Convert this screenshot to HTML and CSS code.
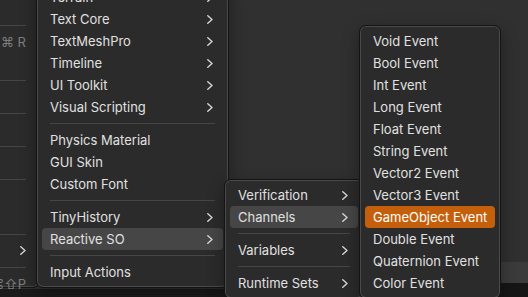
FILE: index.html
```html
<!DOCTYPE html>
<html>
<head>
<meta charset="utf-8">
<link rel="stylesheet" href="styles.css">
</head>
<body>
<div class="desk">
  <div class="bottom-strip"></div>
  <div class="right-band"></div>
  <div class="right-bottom"></div>

  <div class="bgmenu">
    <div class="brow"></div>
    <div class="bsep"><span></span></div>
    <div class="brow"><span class="short">⌘ R</span></div>
    <div class="brow"></div>
    <div class="bsep"><span></span></div>
    <div class="brow"></div>
    <div class="bsep"><span></span></div>
    <div class="brow"></div>
    <div class="bsep"><span></span></div>
    <div class="brow"></div>
    <div class="bsep"><span></span></div>
    <div class="brow"></div>
    <div class="brow"></div>
    <div class="bsep"><span></span></div>
    <div class="brow"><svg class="chev" width="6" height="9" viewBox="0 0 6 9"><polyline points="0.8,0.8 5,4.5 0.8,8.2"/></svg></div>
    <div class="bsep"><span></span></div>
    <div class="brow"><span class="short">⌘⇧P</span></div>
  </div>

  <div class="menu m1">
    <div class="item"><span>Terrain</span><svg class="chev" width="6" height="9" viewBox="0 0 6 9"><polyline points="0.8,0.8 5,4.5 0.8,8.2"/></svg></div>
    <div class="item"><span>Text Core</span><svg class="chev" width="6" height="9" viewBox="0 0 6 9"><polyline points="0.8,0.8 5,4.5 0.8,8.2"/></svg></div>
    <div class="item"><span>TextMeshPro</span><svg class="chev" width="6" height="9" viewBox="0 0 6 9"><polyline points="0.8,0.8 5,4.5 0.8,8.2"/></svg></div>
    <div class="item"><span>Timeline</span><svg class="chev" width="6" height="9" viewBox="0 0 6 9"><polyline points="0.8,0.8 5,4.5 0.8,8.2"/></svg></div>
    <div class="item"><span>UI Toolkit</span><svg class="chev" width="6" height="9" viewBox="0 0 6 9"><polyline points="0.8,0.8 5,4.5 0.8,8.2"/></svg></div>
    <div class="item"><span>Visual Scripting</span><svg class="chev" width="6" height="9" viewBox="0 0 6 9"><polyline points="0.8,0.8 5,4.5 0.8,8.2"/></svg></div>
    <div class="sep"><span></span></div>
    <div class="item"><span>Physics Material</span></div>
    <div class="item"><span>GUI Skin</span></div>
    <div class="item"><span>Custom Font</span></div>
    <div class="sep"><span></span></div>
    <div class="item"><span>TinyHistory</span><svg class="chev" width="6" height="9" viewBox="0 0 6 9"><polyline points="0.8,0.8 5,4.5 0.8,8.2"/></svg></div>
    <div class="item hl"><span>Reactive SO</span><svg class="chev" width="6" height="9" viewBox="0 0 6 9"><polyline points="0.8,0.8 5,4.5 0.8,8.2"/></svg></div>
    <div class="sep"><span></span></div>
    <div class="item"><span>Input Actions</span></div>
  </div>

  <div class="menu m2">
    <div class="item"><span>Verification</span><svg class="chev" width="6" height="9" viewBox="0 0 6 9"><polyline points="0.8,0.8 5,4.5 0.8,8.2"/></svg></div>
    <div class="item hl"><span>Channels</span><svg class="chev" width="6" height="9" viewBox="0 0 6 9"><polyline points="0.8,0.8 5,4.5 0.8,8.2"/></svg></div>
    <div class="sep"><span></span></div>
    <div class="item"><span>Variables</span><svg class="chev" width="6" height="9" viewBox="0 0 6 9"><polyline points="0.8,0.8 5,4.5 0.8,8.2"/></svg></div>
    <div class="sep"><span></span></div>
    <div class="item"><span>Runtime Sets</span><svg class="chev" width="6" height="9" viewBox="0 0 6 9"><polyline points="0.8,0.8 5,4.5 0.8,8.2"/></svg></div>
  </div>

  <div class="menu m3">
    <div class="item"><span>Void Event</span></div>
    <div class="item"><span>Bool Event</span></div>
    <div class="item"><span>Int Event</span></div>
    <div class="item"><span>Long Event</span></div>
    <div class="item"><span>Float Event</span></div>
    <div class="item"><span>String Event</span></div>
    <div class="item"><span>Vector2 Event</span></div>
    <div class="item"><span>Vector3 Event</span></div>
    <div class="item sel"><span>GameObject Event</span></div>
    <div class="item"><span>Double Event</span></div>
    <div class="item"><span>Quaternion Event</span></div>
    <div class="item"><span>Color Event</span></div>
  </div>
</div>
</body>
</html>
```

FILE: styles.css
```css
html, body {
  margin: 0;
  padding: 0;
}
body {
  width: 528px;
  height: 297px;
  overflow: hidden;
  background: #303030;
  font-family: Inter, "Liberation Sans", sans-serif;
  font-size: 13px;
  color: #e0e0e0;
}
.desk {
  position: relative;
  width: 528px;
  height: 297px;
  overflow: hidden;
}
.bottom-strip {
  position: absolute;
  left: 0;
  top: 289px;
  width: 528px;
  height: 8px;
  background: #1b1b1b;
}
.right-band {
  position: absolute;
  left: 495px;
  top: 262px;
  width: 33px;
  height: 21px;
  background: #3b3b3b;
}
.right-bottom {
  position: absolute;
  left: 495px;
  top: 283px;
  width: 33px;
  height: 14px;
  background: #161616;
}
.bgmenu {
  position: absolute;
  left: -60px;
  top: -8.5px;
  width: 100px;
  height: 296px;
  box-sizing: border-box;
  padding-top: 5px;
  background: #2b2b2b;
  border: 1px solid #141414;
  border-radius: 7px;
  box-shadow: inset 0 0 0 1px #474747;
}
.brow {
  height: 22px;
  display: flex;
  align-items: center;
  justify-content: flex-end;
  padding-right: 13px;
}
.short {
  color: #7d7d7d;
  font-size: 13px;
}
.bsep {
  height: 11px;
  display: flex;
  align-items: center;
  padding-right: 13px;
}
.bsep span, .sep span {
  display: block;
  flex: 1;
  height: 1px;
  background: #464646;
}
.menu {
  position: absolute;
  box-sizing: border-box;
  background: #2b2b2b;
  border: 1px solid #141414;
  border-radius: 7px;
  box-shadow: inset 0 0 0 1px #4a4a4a, 0 6px 16px rgba(0,0,0,0.35);
  padding: 4px 0;
}
.m1 {
  left: 36px;
  top: -19px;
  width: 193px;
}
.m2 {
  left: 224px;
  top: 179px;
  width: 140px;
}
.m3 {
  left: 359px;
  top: 25px;
  width: 142px;
}
.item {
  height: 22px;
  margin: 0 5px;
  padding: 0 10px 0 8px;
  display: flex;
  align-items: center;
  justify-content: space-between;
  border-radius: 4px;
  white-space: nowrap;
}
.item.hl {
  background: #464646;
}
.item.sel {
  background: #c65f0b;
  color: #ffffff;
}
.sep {
  height: 11px;
  display: flex;
  align-items: center;
  padding: 0 13px;
}
.chev {
  display: block;
  fill: none;
  stroke: #d8d8d8;
  stroke-width: 1.4;
  stroke-linecap: round;
  stroke-linejoin: round;
}
```
